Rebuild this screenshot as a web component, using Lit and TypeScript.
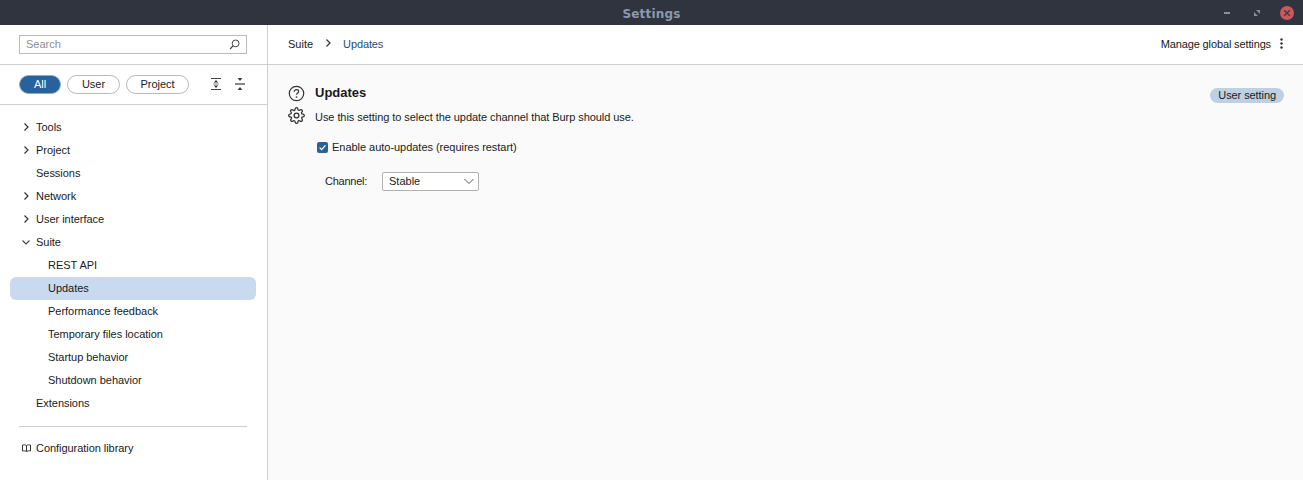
import { LitElement, html, css, svg } from "lit";
import { customElement } from "lit/decorators.js";

const right = svg`<path d="M1.5 .5 L5 4 L1.5 7.5" fill="none" stroke="#333" stroke-width="1.2"/>`;

@customElement("app-root")
export class AppRoot extends LitElement {
  static styles = css`
    :host { display: block; width: 1303px; height: 480px; overflow: hidden; font-family: "Liberation Sans", Arial, sans-serif; font-size: 11px; color: #1a1a1a; background: #fff; }
    * { box-sizing: border-box; }
    .titlebar { height: 25px; background: #2f343f; display: flex; align-items: center; justify-content: center; position: relative; }
    .title { font-family: "DejaVu Sans", sans-serif; font-weight: 700; font-size: 12px; color: #8d99ad; letter-spacing: .2px; padding-top: 2px; }
    .winbtns { position: absolute; right: 9px; top: 0; height: 25px; display: flex; align-items: center; gap: 16px; }
    .win { width: 14px; height: 14px; display: flex; align-items: center; justify-content: center; }
    .close { background: #cc575d; border-radius: 50%; }
    .body { display: flex; height: 455px; }
    .side { width: 268px; border-right: 1px solid #cfcfcf; background: #fff; flex: none; }
    .searchrow { height: 40px; border-bottom: 1px solid #cfcfcf; padding: 10px 20px 0 19px; }
    .search { height: 19px; border: 1px solid #b9b9b9; display: flex; align-items: center; justify-content: space-between; padding: 0 6px 0 6px; color: #8f8f8f; }
    .search span { margin-bottom: 2px; }
    .filterrow { height: 40px; border-bottom: 1px solid #cfcfcf; padding: 10px 0 0 19px; display: flex; align-items: flex-start; }
    .pill { height: 19px; border-radius: 10px; border: 1px solid #b9b9b9; display: flex; align-items: center; justify-content: center; margin-right: 6px; background: #fff; padding-bottom: 2px; }
    .pill.on { background: #28629d; border-color: #8fa9c4; color: #fff; }
    .p1 { width: 42px; } .p2 { width: 53px; } .p3 { width: 63px; }
    .tools { display: flex; margin-left: 16px; gap: 14px; padding-top: 2px; }
    .tree { padding: 11px 11px 0 10px; letter-spacing: -0.03px; }
    .row { height: 23px; display: flex; align-items: center; padding: 0 0 2px 26px; position: relative; }
    .row.sub { padding-left: 38px; }
    .row.sel { background: #c9d9ef; border-radius: 6px; }
    .chev { position: absolute; left: 13px; top: 7px; }
    .chev.down { left: 12px; }
    .hr { height: 1px; background: #cfcfcf; margin: 11px 9px 10px 9px; }
    .lib { letter-spacing: -0.05px; }
    .lib svg { position: absolute; left: 12px; top: 7px; }
    .main { flex: 1; background: #fafafa; min-width: 0; }
    .mainhead { height: 40px; background: #fff; border-bottom: 1px solid #cfcfcf; display: flex; align-items: center; padding: 0 20px 2px 20px; }
    .crumb { color: #1f4e80; letter-spacing: -0.12px; }
    .sep { margin: 0 11px 0 12px; display: flex; }
    .spacer { flex: 1; }
    .manage { letter-spacing: -0.13px; }
    .kebab { margin-left: 9px; display: flex; }
    .content { padding: 20px 19px 0 20px; display: flex; gap: 9px; }
    .icons { width: 18px; display: flex; flex-direction: column; flex: none; }
    .icons svg { display: block; }
    .gear { margin-top: 5px; }
    .pane { flex: 1; }
    .headline { display: flex; justify-content: space-between; align-items: flex-start; height: 24px; }
    h2 { margin: 0; font-size: 13px; font-weight: 700; line-height: 15px; }
    .badge { margin-top: 3px; height: 15px; border-radius: 8px; background: #bdd0e4; padding: 0 8px 2px; display: flex; align-items: center; letter-spacing: -0.08px; }
    .desc { line-height: 13px; margin-top: 2px; letter-spacing: -0.06px; }
    .check { display: flex; align-items: center; gap: 4px; margin: 16px 0 0 2px; height: 14px; letter-spacing: -0.03px; }
    .box { width: 11px; height: 11px; background: #28629d; border-radius: 2px; display: flex; align-items: center; justify-content: center; }
    .chan { display: flex; align-items: center; margin: 18px 0 0 10px; height: 19px; }
    .chan .lab { width: 57px; letter-spacing: -0.25px; margin-bottom: 2px; }
    .select { width: 97px; height: 19px; border: 1px solid #b0b0b0; border-radius: 2px; background: #fff; display: flex; align-items: center; justify-content: space-between; padding: 0 4px 0 6px; }
    .select span { margin-bottom: 2px; }
  `;

  private row(label: string, opts: { sub?: boolean; sel?: boolean; chev?: "r" | "d" } = {}) {
    return html`<div class="row ${opts.sub ? "sub" : ""} ${opts.sel ? "sel" : ""}">
      ${opts.chev === "r" ? html`<svg class="chev" width="7" height="9" viewBox="0 0 7 9">${right}</svg>` : ""}
      ${opts.chev === "d" ? html`<svg class="chev down" width="9" height="9" viewBox="0 0 9 9"><path d="M.5 2.5 L4 6 L7.5 2.5" fill="none" stroke="#444" stroke-width="1.1"/></svg>` : ""}
      ${label}
    </div>`;
  }

  render() {
    return html`
      <div class="titlebar">
        <span class="title">Settings</span>
        <div class="winbtns">
          <div class="win"><svg width="8" height="4"><rect x="1" y="1" width="6" height="2" fill="#8a8f99"/></svg></div>
          <div class="win"><svg width="8" height="8" viewBox="0 0 8 8"><path d="M3 1h4v4zM1 3v4h4z" fill="#8a8f99"/></svg></div>
          <div class="win close"><svg width="8" height="8" viewBox="0 0 8 8"><path d="M1.2 1.2 L6.8 6.8 M6.8 1.2 L1.2 6.8" stroke="#4a3a3f" stroke-width="1.5"/></svg></div>
        </div>
      </div>
      <div class="body">
        <aside class="side">
          <div class="searchrow">
            <div class="search"><span>Search</span>
              <svg width="11" height="11" viewBox="0 0 11 11"><circle cx="6.6" cy="4.4" r="3.4" fill="none" stroke="#444"/><path d="M4 7 L1 10" stroke="#444" stroke-width="1.1"/></svg>
            </div>
          </div>
          <div class="filterrow">
            <div class="pill on p1">All</div>
            <div class="pill p2">User</div>
            <div class="pill p3">Project</div>
            <div class="tools">
              <svg width="10" height="14" viewBox="0 0 10 14"><path d="M0 1.5H10M0 12.5H10" stroke="#444"/><path d="M2 7H8" stroke="#888"/><path d="M5 3L7.2 5.5H2.8zM5 11L2.8 8.5H7.2z" fill="#333"/></svg>
              <svg width="10" height="14" viewBox="0 0 10 14"><path d="M0 7H10" stroke="#888" stroke-width="2"/><path d="M5 4L2.7 1H7.3zM5 10L2.7 13H7.3z" fill="#333"/></svg>
            </div>
          </div>
          <div class="tree">
            ${this.row("Tools", { chev: "r" })}
            ${this.row("Project", { chev: "r" })}
            ${this.row("Sessions")}
            ${this.row("Network", { chev: "r" })}
            ${this.row("User interface", { chev: "r" })}
            ${this.row("Suite", { chev: "d" })}
            ${this.row("REST API", { sub: true })}
            ${this.row("Updates", { sub: true, sel: true })}
            ${this.row("Performance feedback", { sub: true })}
            ${this.row("Temporary files location", { sub: true })}
            ${this.row("Startup behavior", { sub: true })}
            ${this.row("Shutdown behavior", { sub: true })}
            ${this.row("Extensions")}
            <div class="hr"></div>
            <div class="row lib">
              <svg width="9" height="9" viewBox="0 0 9 9"><path d="M4.5 1.5C3.5.8 2 .7.5 1V7C2 6.7 3.5 6.8 4.5 7.5C5.5 6.8 7 6.7 8.5 7V1C7 .7 5.5.8 4.5 1.5ZM4.5 1.5V7.5" fill="none" stroke="#333"/></svg>
              Configuration library
            </div>
          </div>
        </aside>
        <main class="main">
          <div class="mainhead">
            <span>Suite</span>
            <span class="sep"><svg width="7" height="9" viewBox="0 0 7 9">${right}</svg></span>
            <span class="crumb">Updates</span>
            <span class="spacer"></span>
            <span class="manage">Manage global settings</span>
            <span class="kebab"><svg width="3" height="11" viewBox="0 0 3 11"><circle cx="1.5" cy="1.5" r="1.2" fill="#333"/><circle cx="1.5" cy="5.5" r="1.2" fill="#333"/><circle cx="1.5" cy="9.5" r="1.2" fill="#333"/></svg></span>
          </div>
          <div class="content">
            <div class="icons">
              <svg width="17" height="17" viewBox="0 0 17 17"><circle cx="8.5" cy="8.5" r="7.2" fill="none" stroke="#333" stroke-width="1.2"/><path d="M6.3 6.7C6.3 5.4 7.3 4.7 8.5 4.7C9.7 4.7 10.6 5.5 10.6 6.5C10.6 7.9 8.5 8 8.5 9.8" fill="none" stroke="#333" stroke-width="1.2"/><circle cx="8.5" cy="12" r=".85" fill="#333"/></svg>
              <svg class="gear" width="17" height="17" viewBox="0 0 24 24" fill="none" stroke="#333" stroke-width="1.8"><circle cx="12" cy="12" r="3.4"/><path d="M19.4 15a1.65 1.65 0 0 0 .33 1.82l.06.06a2 2 0 1 1-2.83 2.83l-.06-.06a1.65 1.65 0 0 0-2.82 1.17V21a2 2 0 1 1-4 0v-.09a1.65 1.65 0 0 0-2.82-1.17l-.06.06a2 2 0 1 1-2.83-2.83l.06-.06A1.65 1.65 0 0 0 3.09 14H3a2 2 0 1 1 0-4h.09a1.65 1.65 0 0 0 1.17-2.82l-.06-.06a2 2 0 1 1 2.83-2.83l.06.06A1.65 1.65 0 0 0 10 3.09V3a2 2 0 1 1 4 0v.09a1.65 1.65 0 0 0 2.82 1.17l.06-.06a2 2 0 1 1 2.83 2.83l-.06.06A1.65 1.65 0 0 0 20.91 10H21a2 2 0 1 1 0 4h-.09a1.65 1.65 0 0 0-1.51 1z"/></svg>
            </div>
            <div class="pane">
              <div class="headline"><h2>Updates</h2><span class="badge">User setting</span></div>
              <div class="desc">Use this setting to select the update channel that Burp should use.</div>
              <div class="check">
                <span class="box"><svg width="9" height="9" viewBox="0 0 9 9"><path d="M1.6 4.6L3.7 6.6L7.4 2.4" fill="none" stroke="#fff" stroke-width="1.3"/></svg></span>
                Enable auto-updates (requires restart)
              </div>
              <div class="chan">
                <span class="lab">Channel:</span>
                <div class="select"><span>Stable</span><svg width="10" height="7" viewBox="0 0 10 7"><path d="M.5 1 L5 5.5 L9.5 1" fill="none" stroke="#555"/></svg></div>
              </div>
            </div>
          </div>
        </main>
      </div>
    `;
  }
}
